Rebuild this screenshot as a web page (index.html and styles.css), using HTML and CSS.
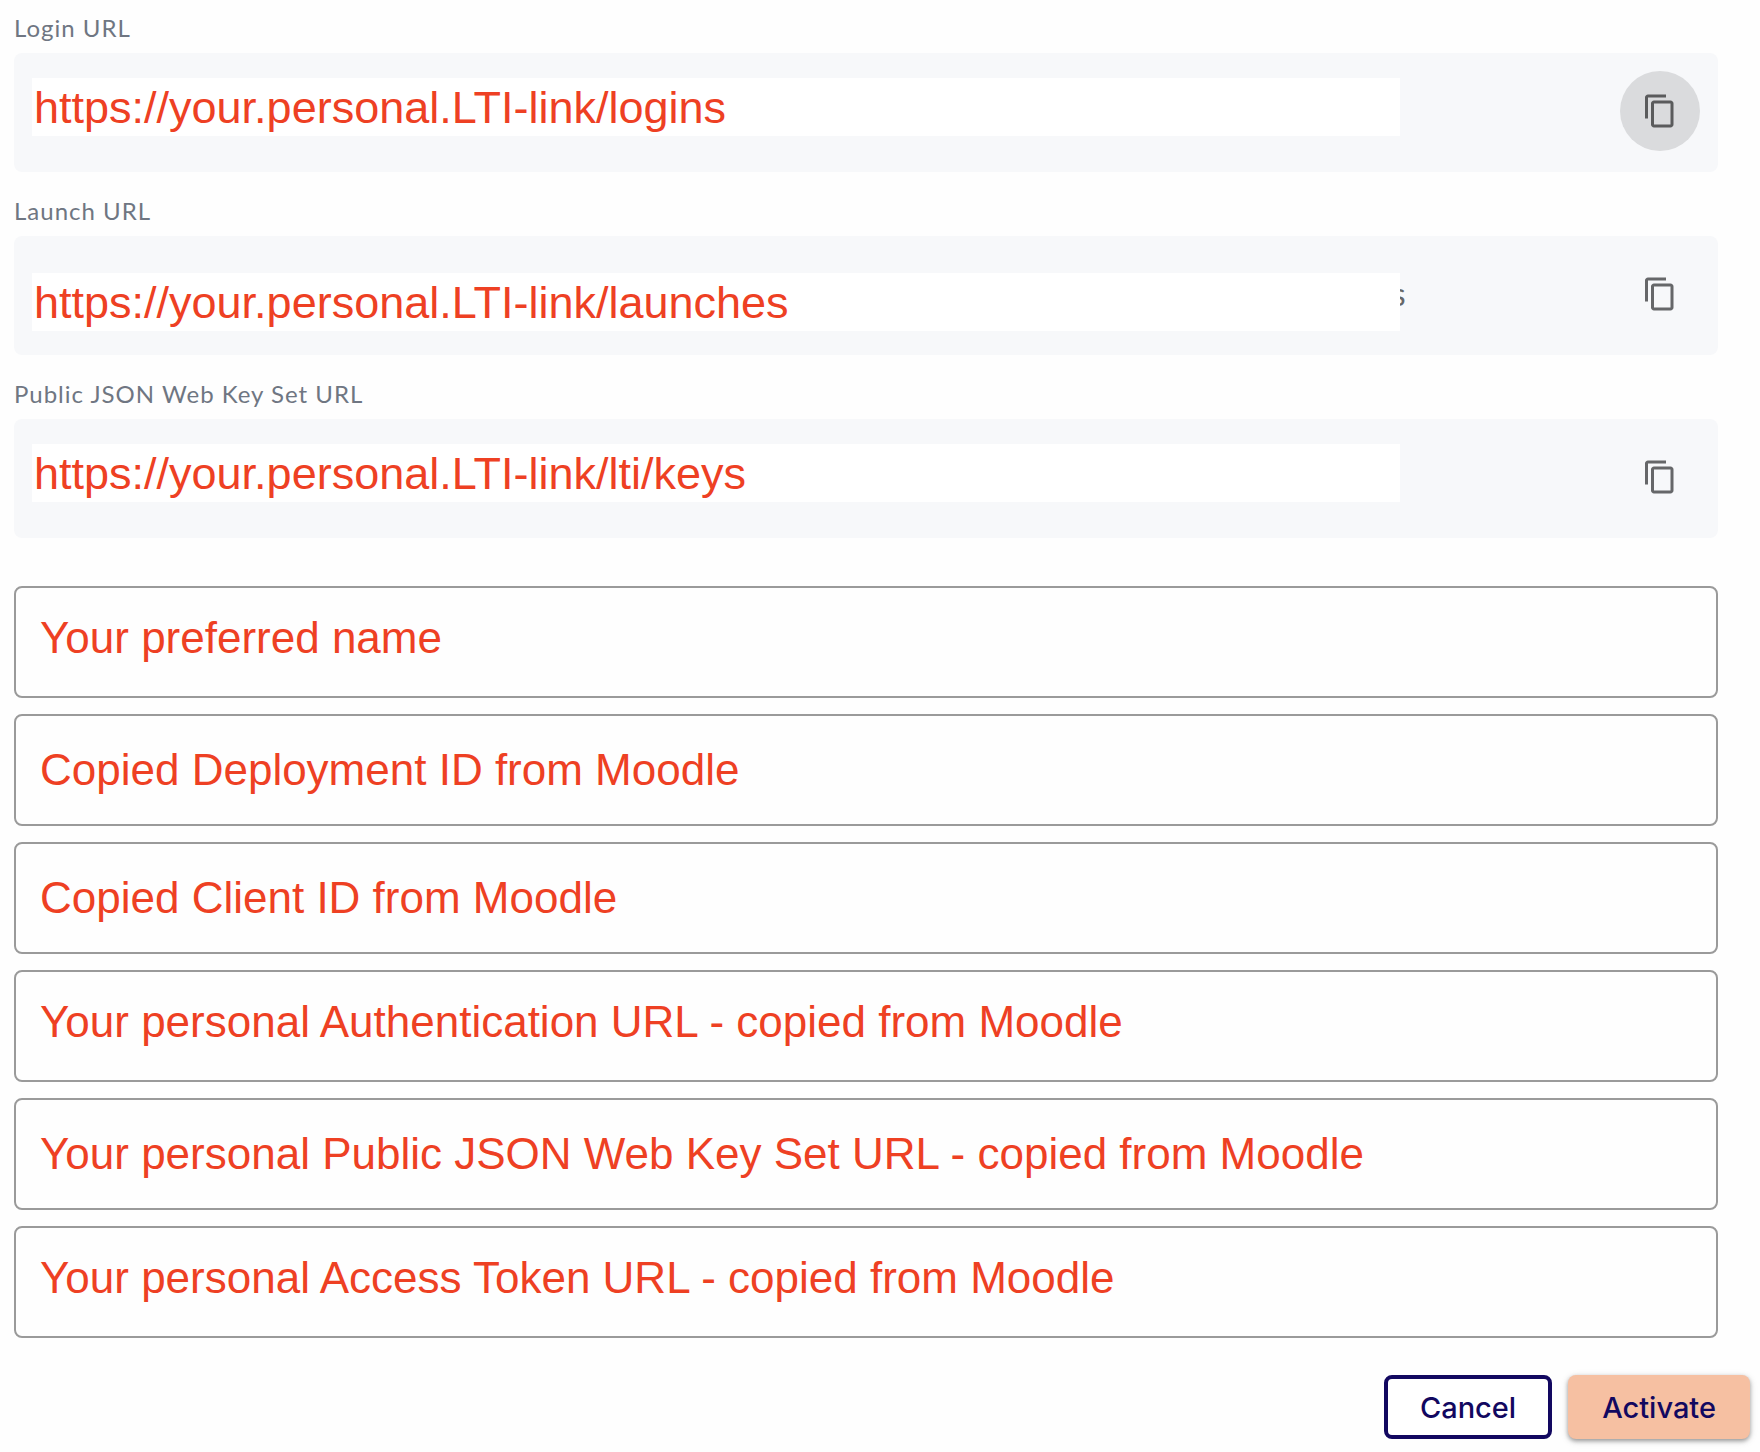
FILE: index.html
```html
<!DOCTYPE html>
<html lang="en">
<head>
    <meta charset="UTF-8">
    <meta name="viewport" content="width=device-width, initial-scale=1.0">
    <title>LTI Settings</title>
    <link rel="stylesheet" href="styles.css">
</head>
<body>
    <form class="main">
        <div class="urls">
            <div class="group">
                <label for="LoginUrl">Login URL</label>
                <div class="row">
                    <input id="LoginUrl" class="url" type="text" value="https://your.personal.LTI-link/logins" readonly>
                    <button class="copy active" type="button" aria-label="Copy Login URL">
                        <svg viewBox="0 0 24 24"><path d="M16 1H4c-1.100 0-2 .9-2 2v14h2V3h12V1zm3 4H8c-1.100 0-2 .9-2 2v14c0 1.100.9 2 2 2h11c1.100 0 2-.9 2-2V7c0-1.100-.9-2-2-2zm0 16H8V7h11v14z"/></svg>
                    </button>
                </div>
            </div>
            <div class="group">
                <label for="LaunchUrl">Launch URL</label>
                <div class="row">
                    <input id="LaunchUrl" class="url low" type="text" value="https://your.personal.LTI-link/launches" readonly>
                    <span class="rest">s</span>
                    <button class="copy" type="button" aria-label="Copy Launch URL">
                        <svg viewBox="0 0 24 24"><path d="M16 1H4c-1.100 0-2 .9-2 2v14h2V3h12V1zm3 4H8c-1.100 0-2 .9-2 2v14c0 1.100.9 2 2 2h11c1.100 0 2-.9 2-2V7c0-1.100-.9-2-2-2zm0 16H8V7h11v14z"/></svg>
                    </button>
                </div>
            </div>
            <div class="group">
                <label for="KeysUrl">Public JSON Web Key Set URL</label>
                <div class="row">
                    <input id="KeysUrl" class="url" type="text" value="https://your.personal.LTI-link/lti/keys" readonly>
                    <button class="copy" type="button" aria-label="Copy Public JSON Web Key Set URL">
                        <svg viewBox="0 0 24 24"><path d="M16 1H4c-1.100 0-2 .9-2 2v14h2V3h12V1zm3 4H8c-1.100 0-2 .9-2 2v14c0 1.100.9 2 2 2h11c1.100 0 2-.9 2-2V7c0-1.100-.9-2-2-2zm0 16H8V7h11v14z"/></svg>
                    </button>
                </div>
            </div>
        </div>
        <div class="fields">
            <input class="field" type="text" aria-label="Name" value="Your preferred name">
            <input class="field low" type="text" aria-label="Deployment ID" value="Copied Deployment ID from Moodle">
            <input class="field low" type="text" aria-label="Client ID" value="Copied Client ID from Moodle">
            <input class="field" type="text" aria-label="Authentication URL" value="Your personal Authentication URL - copied from Moodle">
            <input class="field low" type="text" aria-label="Public JSON Web Key Set URL" value="Your personal Public JSON Web Key Set URL - copied from Moodle">
            <input class="field" type="text" aria-label="Access Token URL" value="Your personal Access Token URL - copied from Moodle">
        </div>
        <div class="actions">
            <button class="btn cancel" type="button">Cancel</button>
            <button class="btn activate" type="submit">Activate</button>
        </div>
    </form>
</body>
</html>
```
FILE: styles.css
```css
*{
    margin: 0;
    padding: 0;
    box-sizing: border-box;
}
body{
    background-color: #fefefe;
    font-family: Lato, sans-serif;
}
.main{
    padding: 14px 10px 13px 14px;
}
.urls{
    display: flex;
    flex-direction: column;
    gap: 25px;
    margin-right: 32px;
}
label{
    display: block;
    margin-bottom: 11px;
    font-size: 24px;
    line-height: 28px;
    letter-spacing: 1px;
    color: #6f7682;
}
.row{
    display: flex;
    align-items: flex-start;
    height: 119px;
    padding: 0 18px;
    background-color: #f7f8fa;
    border-radius: 8px;
}
input{
    border: none;
    outline: 0;
    font-family: "Liberation Sans", Arial, sans-serif;
    font-size: 44px;
    color: #ee4023;
}
.url{
    position: relative;
    z-index: 1;
    width: 82%;
    height: 58px;
    margin-top: 25px;
    padding: 2px 2px 0;
    background-color: white;
    font-size: 45px;
}
.url.low{
    margin-top: 37px;
}
/* tail of the long url that sticks out behind the box */
.rest{
    margin: 38px 0 0 -8px;
    font-size: 32px;
    line-height: 40px;
    color: #666769;
}
.copy{
    width: 80px;
    height: 80px;
    margin: 18px 0 0 auto;
    display: flex;
    justify-content: center;
    align-items: center;
    background: none;
    border: none;
    border-radius: 50%;
    color: #666769;
}
.copy.active{
    background-color: #dadbdd;
    color: #5a5b5c;
}
.copy svg{
    width: 36px;
    height: 36px;
    fill: currentColor;
}
.fields{
    display: flex;
    flex-direction: column;
    gap: 16px;
    margin: 48px 32px 0 0;
}
.field{
    width: 100%;
    height: 112px;
    padding: 0 24px 8px;
    background-color: #fefefe;
    border: 2px solid #9a9a9a;
    border-radius: 8px;
}
.field.low{
    padding-bottom: 0;
}
.actions{
    display: flex;
    justify-content: flex-end;
    gap: 16px;
    margin-top: 37px;
}
.btn{
    height: 64px;
    padding: 0 34px;
    border: none;
    border-radius: 8px;
    font-family: Inter, sans-serif;
    font-size: 29px;
    font-weight: 500;
    color: #120860;
}
.cancel{
    padding: 0 32px;
    background-color: white;
    border: 4px solid #120860;
}
.activate{
    background-color: #f6c0a2;
    box-shadow: 0 2px 4px rgba(0, 0, 0, 0.35), 0 2px 8px rgba(0, 0, 0, 0.12);
}
```
